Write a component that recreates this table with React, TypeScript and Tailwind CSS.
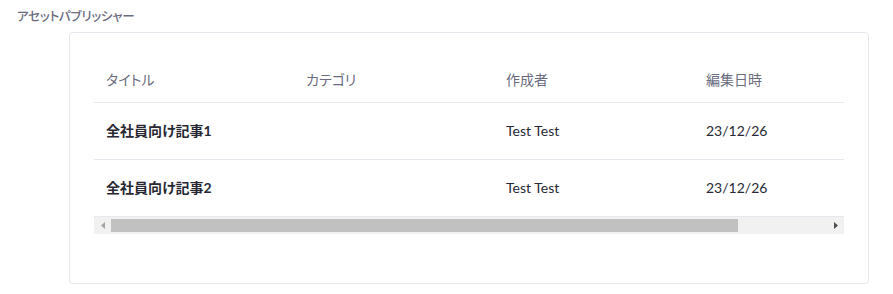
import React from "react";

const rows = [
  { title: "全社員向け記事1", category: "", author: "Test Test", modified: "23/12/26" },
  { title: "全社員向け記事2", category: "", author: "Test Test", modified: "23/12/26" },
];

const font = "[font-family:Lato,'Noto_Sans_CJK_JP',sans-serif] [font-feature-settings:'palt']";

// classic horizontal scrollbar under the table
function HScrollbar() {
  return (
    <div className="flex h-[18px] items-stretch border-t border-[#e7e7ed] bg-[#f1f1f1]">
      <div className="flex w-[17px] items-center justify-center">
        <svg width="4" height="7" viewBox="0 0 4 7">
          <path d="M4 0L0 3.5L4 7Z" fill="#a3a3a3" />
        </svg>
      </div>
      <div className="flex flex-1 items-center">
        <div className="h-[13px] w-[627px] bg-[#c1c1c1]" />
      </div>
      <div className="flex w-[17px] items-center justify-center">
        <svg width="4" height="7" viewBox="0 0 4 7">
          <path d="M0 0L4 3.5L0 7Z" fill="#505050" />
        </svg>
      </div>
    </div>
  );
}

export default function App() {
  return (
    <div className={`w-[893px] h-[294px] bg-white ${font}`}>
      <h2 className="pl-[17px] pt-[8px] h-[32px] text-[12.5px] font-medium tracking-[-0.2px] text-[#6b6c7e]">
        アセットパブリッシャー
      </h2>

      <div className="ml-[69px] w-[800px] rounded border border-[#e7e7ed] px-6 pt-6 pb-[49px]">
        <div className="overflow-hidden">
          <table className="w-[856px] table-fixed border-collapse text-[14px]">
            <thead>
              <tr className="h-[45px] border-b border-[#e7e7ed] text-left text-[#6b6c7e]">
                <th className="w-[200px] px-3 font-normal">タイトル</th>
                <th className="w-[200px] px-3 font-normal">カテゴリ</th>
                <th className="w-[200px] px-3 font-normal">作成者</th>
                <th className="px-3 font-normal">編集日時</th>
              </tr>
            </thead>
            <tbody className="text-[#272833]">
              {rows.map((r, i) => (
                <tr key={i} className={`h-[57px] ${i < rows.length - 1 ? "border-b border-[#e7e7ed]" : ""}`}>
                  <td className="px-3 font-bold">{r.title}</td>
                  <td className="px-3">{r.category}</td>
                  <td className="px-3">{r.author}</td>
                  <td className="px-3">{r.modified}</td>
                </tr>
              ))}
            </tbody>
          </table>
        </div>
        <HScrollbar />
      </div>
    </div>
  );
}
